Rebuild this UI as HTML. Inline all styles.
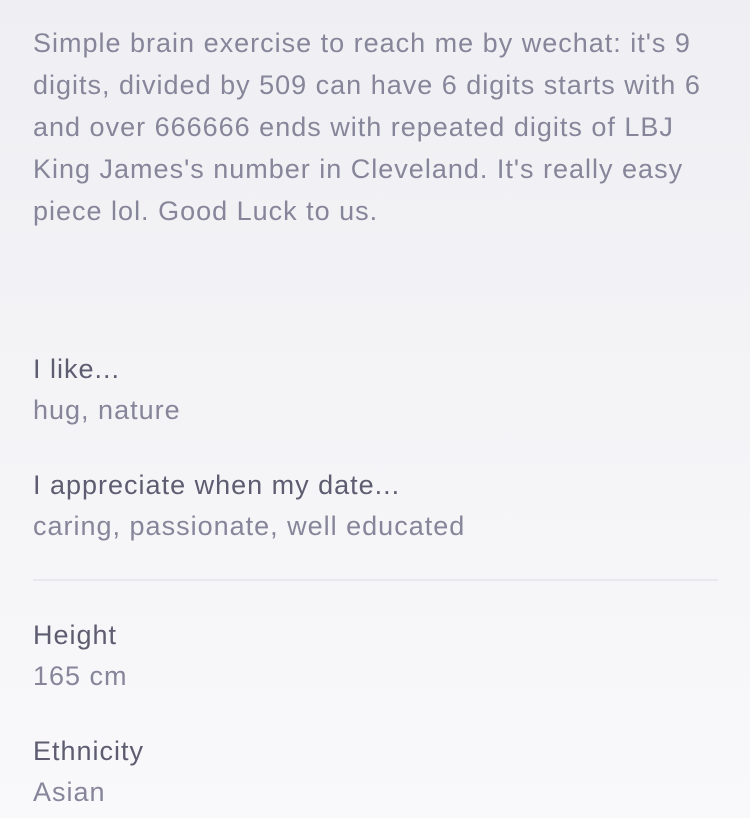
<!DOCTYPE html>
<html><head><style>
html,body{margin:0;padding:0}
body{width:750px;height:818px;overflow:hidden;background:linear-gradient(#efeff3,#f9f9fb);font-family:"Liberation Sans",sans-serif;position:relative}
.l{position:absolute;left:33px;white-space:nowrap;font-size:27px;letter-spacing:1px;line-height:42px;color:#86859a}
.h{color:#5d5c70}
.d{position:absolute;left:33px;width:685px;top:579px;height:2px;background:#e9e9ed}
</style></head><body>
<div class="l" style="top:22px">Simple brain exercise to reach me by wechat: it's 9</div>
<div class="l" style="top:64px">digits, divided by 509 can have 6 digits starts with 6</div>
<div class="l" style="top:106px">and over 666666 ends with repeated digits of LBJ</div>
<div class="l" style="top:148px">King James's number in Cleveland. It's really easy</div>
<div class="l" style="top:190px">piece lol. Good Luck to us.</div>
<div class="l h" style="top:348px">I like...</div>
<div class="l" style="top:389px">hug, nature</div>
<div class="l h" style="top:464px">I appreciate when my date...</div>
<div class="l" style="top:505px">caring, passionate, well educated</div>
<div class="d"></div>
<div class="l h" style="top:614px">Height</div>
<div class="l" style="top:655px">165 cm</div>
<div class="l h" style="top:730px">Ethnicity</div>
<div class="l" style="top:771px">Asian</div>
</body></html>
